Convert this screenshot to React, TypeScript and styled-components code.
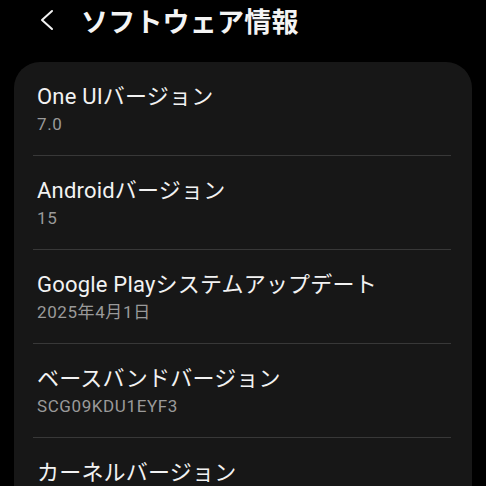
import React from "react";
import styled, { createGlobalStyle } from "styled-components";

const GlobalStyle = createGlobalStyle`
  html, body {
    margin: 0;
    padding: 0;
    background: #000;
    overflow: hidden;
  }
  body {
    font-family: Roboto, "Noto Sans CJK JP", sans-serif;
    color: #f2f2f2;
  }
`;

const Screen = styled.div`
  width: 486px;
  height: 486px;
  background: #000;
  overflow: hidden;
  display: flex;
  flex-direction: column;
`;

const Header = styled.div`
  height: 40px;
  flex-shrink: 0;
  display: flex;
  align-items: center;
  padding-left: 37px;
  gap: 24px;
`;

const BackButton = styled.div`
  width: 20px;
  height: 24px;
  display: flex;
  align-items: center;
  justify-content: center;
`;

const Title = styled.h1`
  margin: 0;
  font-size: 27px;
  font-weight: 700;
  letter-spacing: 0.2px;
  color: #f4f4f4;
  font-family: "Noto Sans CJK JP", sans-serif;
`;

const Card = styled.div`
  margin: 22px 14px 0;
  background: #171717;
  border-radius: 26px;
  display: flex;
  flex-direction: column;
`;

const Row = styled.div`
  height: 93px;
  padding: 20px 0 0 23px;
  box-sizing: border-box;
  display: flex;
  flex-direction: column;
  flex-shrink: 0;
`;

const RowTitle = styled.div`
  font-size: 22px;
  line-height: 29px;
  letter-spacing: 0.2px;
  color: #f2f2f2;
`;

const RowValue = styled.div`
  font-size: 17px;
  line-height: 26px;
  letter-spacing: 0.6px;
  color: #9a9a9a;
`;

const Divider = styled.div`
  height: 1px;
  flex-shrink: 0;
  margin: 0 21px 0 19px;
  background: #383838;
`;

const items = [
  { title: "One UIバージョン", value: "7.0" },
  { title: "Androidバージョン", value: "15" },
  { title: "Google Playシステムアップデート", value: "2025年4月1日" },
  { title: "ベースバンドバージョン", value: "SCG09KDU1EYF3" },
  { title: "カーネルバージョン", value: "6.6.30-android15" },
];

export default function App() {
  return (
    <Screen>
      <GlobalStyle />
      <Header>
        <BackButton>
          <svg width="16" height="22" viewBox="0 0 16 22">
            <path
              d="M13 2 L3 11 L13 20"
              fill="none"
              stroke="#f2f2f2"
              strokeWidth="2"
              strokeLinecap="round"
              strokeLinejoin="round"
            />
          </svg>
        </BackButton>
        <Title>ソフトウェア情報</Title>
      </Header>
      <Card>
        {items.map((item, i) => (
          <React.Fragment key={item.title}>
            {i > 0 && <Divider />}
            <Row>
              <RowTitle>{item.title}</RowTitle>
              <RowValue>{item.value}</RowValue>
            </Row>
          </React.Fragment>
        ))}
      </Card>
    </Screen>
  );
}
